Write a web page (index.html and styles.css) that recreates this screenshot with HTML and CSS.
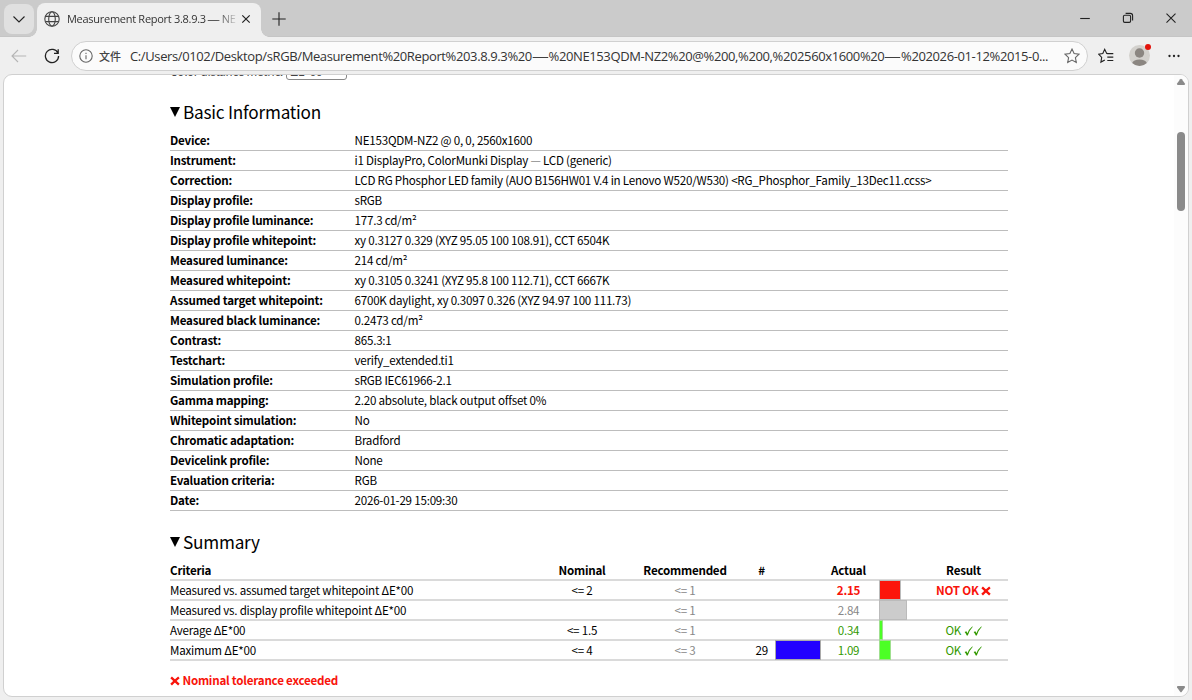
FILE: index.html
```html
<!DOCTYPE html>
<html lang="en">

<head>
  <meta charset="UTF-8">
  <meta name="viewport" content="width=device-width, initial-scale=1.0">
  <title>Measurement Report 3.8.9.3 — NE153QDM-NZ2</title>
  <link rel="stylesheet" href="styles.css">
</head>

<body>
  <div class="titlebar">
    <button class="tab-menu">
      <svg width="14" height="14" viewBox="0 0 14 14"><path d="M1.5 4.5L7 10l5.5-5.5"/></svg>
    </button>
    <div class="tab">
      <svg class="globe" width="16" height="16" viewBox="0 0 16 16">
        <circle cx="8" cy="8" r="7.2"/><ellipse cx="8" cy="8" rx="3.3" ry="7.2"/><path d="M1.4 5.4h13.2M1.4 10.6h13.2"/>
      </svg>
      <span class="tab-title">Measurement Report 3.8.9.3 <b class="long">—</b> NE</span>
      <svg class="tab-close" width="10" height="10" viewBox="0 0 10 10"><path d="M1.3 1.3l7.4 7.4M8.7 1.3L1.3 8.7"/></svg>
    </div>
    <svg class="new-tab" width="14" height="14" viewBox="0 0 14 14"><path d="M7 .3v13.4M.3 7h13.4"/></svg>
    <div class="window-buttons">
      <svg width="12" height="12" viewBox="0 0 12 12"><path d="M1.2 6.5h9.6"/></svg>
      <svg width="12" height="12" viewBox="0 0 12 12"><rect x="1.4" y="3.2" width="7.2" height="7.2" rx="1.3"/><path d="M3.6 1.4h4.7a2.3 2.3 0 0 1 2.3 2.3v4.7"/></svg>
      <svg width="12" height="12" viewBox="0 0 12 12"><path d="M1.5 1.7l9 9M10.5 1.7l-9 9"/></svg>
    </div>
  </div>

  <div class="toolbar">
    <svg class="back" width="16" height="16" viewBox="0 0 16 16"><path d="M15.2 8H1M7 2L1 8l6 6"/></svg>
    <svg class="reload" width="16" height="16" viewBox="0 0 16 16"><path d="M14 5.2A6.6 6.6 0 1 0 14.6 8M14.2 1.2v4.2H10"/></svg>
    <div class="address">
      <svg class="info" width="14" height="14" viewBox="0 0 14 14"><circle cx="7" cy="7" r="6.2"/><path d="M7 6.2v4M7 3.8v1.2"/></svg>
      <span class="scheme">文件</span>
      <span class="url">C:/Users/0102/Desktop/sRGB/Measurement%20Report%203.8.9.3%20<b class="long">—</b>%20NE153QDM-NZ2%20@%200,%200,%202560x1600%20<b class="long">—</b>%202026-01-12%2015-0...</span>
      <svg class="star" width="16" height="16" viewBox="0 0 16 16"><path d="M8 1.1l2.1 4.5 4.9.6-3.6 3.4.9 4.9L8 12.1l-4.3 2.4.9-4.9L1 6.2l4.9-.6z"/></svg>
    </div>
    <svg class="favorites" width="16" height="16" viewBox="0 0 16 16"><path d="M9.3 5.4H8.7L6.7 1.3 4.8 5.5l-4.2.7 3.1 3.2-.8 4.7 3.9-2.2M9.6 5.6h5.7M9.3 9.1h6M9.3 12.5h6M8.7 5.4l1 .2"/></svg>
    <div class="avatar">
      <svg width="21" height="21" viewBox="0 0 21 21"><circle cx="10.5" cy="10.5" r="10.5" fill="#d3d1cd"/><circle cx="10.5" cy="8" r="4.7" fill="#8b8681"/><path d="M3.2 18a7.5 4.6 0 0 1 14.6 0 10.5 10.5 0 0 1-14.6 0z" fill="#8b8681"/></svg>
      <i class="dot"></i>
    </div>
    <svg class="more" width="12" height="4" viewBox="0 0 12 4"><circle cx="1.5" cy="2" r="1.15"/><circle cx="6" cy="2" r="1.15"/><circle cx="10.5" cy="2" r="1.15"/></svg>
  </div>

  <div class="viewport">
    <div class="report">
      <div class="metric">Color distance metric: <span class="select">ΔE*00</span></div>

      <h2><span class="arrow"></span>Basic Information</h2>
      <table class="info-table">
        <tr><th>Device:</th><td>NE153QDM-NZ2 @ 0, 0, 2560x1600</td></tr>
        <tr><th>Instrument:</th><td>i1 DisplayPro, ColorMunki Display <span class="dash">—</span> LCD (generic)</td></tr>
        <tr><th>Correction:</th><td>LCD RG Phosphor LED family (AUO B156HW01 V.4 in Lenovo W520/W530) &lt;RG_Phosphor_Family_13Dec11.ccss&gt;</td></tr>
        <tr><th>Display profile:</th><td>sRGB</td></tr>
        <tr><th>Display profile luminance:</th><td>177.3 cd/m²</td></tr>
        <tr><th>Display profile whitepoint:</th><td>xy 0.3127 0.329 (XYZ 95.05 100 108.91), CCT 6504K</td></tr>
        <tr><th>Measured luminance:</th><td>214 cd/m²</td></tr>
        <tr><th>Measured whitepoint:</th><td>xy 0.3105 0.3241 (XYZ 95.8 100 112.71), CCT 6667K</td></tr>
        <tr><th>Assumed target whitepoint:</th><td>6700K daylight, xy 0.3097 0.326 (XYZ 94.97 100 111.73)</td></tr>
        <tr><th>Measured black luminance:</th><td>0.2473 cd/m²</td></tr>
        <tr><th>Contrast:</th><td>865.3:1</td></tr>
        <tr><th>Testchart:</th><td>verify_extended.ti1</td></tr>
        <tr><th>Simulation profile:</th><td>sRGB IEC61966-2.1</td></tr>
        <tr><th>Gamma mapping:</th><td>2.20 absolute, black output offset 0%</td></tr>
        <tr><th>Whitepoint simulation:</th><td>No</td></tr>
        <tr><th>Chromatic adaptation:</th><td>Bradford</td></tr>
        <tr><th>Devicelink profile:</th><td>None</td></tr>
        <tr><th>Evaluation criteria:</th><td>RGB</td></tr>
        <tr><th>Date:</th><td>2026-01-29 15:09:30</td></tr>
      </table>

      <h2 class="summary-title"><span class="arrow"></span>Summary</h2>
      <div class="summary">
        <div class="row head">
          <span class="left">Criteria</span><span>Nominal</span><span>Recommended</span><span>#</span><span></span><span>Actual</span><span></span><span>Result</span>
        </div>
        <div class="row">
          <span class="left">Measured vs. assumed target whitepoint ΔE*00</span><span>&lt;= 2</span><span class="gray">&lt;= 1</span><span></span><span></span><span class="bad">2.15</span><span class="bar"><i class="red" style="width: 22px"></i></span><span class="bad">NOT OK <svg class="cross" width="10" height="10" viewBox="0 0 9 9"><path d="M1 1.2Q4 4 8 7.8M8 1.2Q4.6 4 1 7.8"/></svg></span>
        </div>
        <div class="row">
          <span class="left">Measured vs. display profile whitepoint ΔE*00</span><span></span><span class="gray">&lt;= 1</span><span></span><span></span><span class="gray">2.84</span><span class="bar"><i class="silver" style="width: 28px"></i></span><span></span>
        </div>
        <div class="row">
          <span class="left">Average ΔE*00</span><span>&lt;= 1.5</span><span class="gray">&lt;= 1</span><span></span><span></span><span class="good">0.34</span><span class="bar"><i class="green" style="width: 4px"></i></span><span class="good">OK <svg class="check" width="18" height="10" viewBox="0 0 18 10"><path d="M.6 6.1L2.4 5.2 3.4 7.3Q5 3 8.2.4L8.8.8Q5.2 4.6 3.8 9.6H2.8Q1.8 7.4.6 6.1zM9.6 6.1l1.8-.9 1 2.1Q14 3 17.2.4l.6.4Q14.2 4.6 12.8 9.6h-1Q10.8 7.4 9.6 6.1z"/></svg></span>
        </div>
        <div class="row">
          <span class="left">Maximum ΔE*00</span><span>&lt;= 4</span><span class="gray">&lt;= 3</span><span class="num">29</span><span class="swatch"></span><span class="good">1.09</span><span class="bar"><i class="green" style="width: 12px"></i></span><span class="good">OK <svg class="check" width="18" height="10" viewBox="0 0 18 10"><path d="M.6 6.1L2.4 5.2 3.4 7.3Q5 3 8.2.4L8.8.8Q5.2 4.6 3.8 9.6H2.8Q1.8 7.4.6 6.1zM9.6 6.1l1.8-.9 1 2.1Q14 3 17.2.4l.6.4Q14.2 4.6 12.8 9.6h-1Q10.8 7.4 9.6 6.1z"/></svg></span>
        </div>
      </div>
      <p class="bad note"><svg class="cross" width="10" height="10" viewBox="0 0 9 9"><path d="M1 1.2Q4 4 8 7.8M8 1.2Q4.6 4 1 7.8"/></svg> Nominal tolerance exceeded</p>
    </div>

    <div class="scrollbar">
      <svg width="10" height="8" viewBox="0 0 10 8"><path d="M4.2 1.2q.8-1 1.6 0l3.1 4.4q.6 1.2-.7 1.3H1.8Q.5 6.8 1.1 5.6z"/></svg>
      <div class="thumb"></div>
      <svg class="down" width="10" height="8" viewBox="0 0 10 8"><path d="M4.2 6.8q.8 1 1.6 0l3.1-4.4q.6-1.2-.7-1.3H1.8Q.5 1.2 1.1 2.4z"/></svg>
    </div>
  </div>
</body>

</html>
```
FILE: styles.css
```css
* {
  margin: 0;
  padding: 0;
  box-sizing: border-box;
}

html,
body {
  height: 100%;
  overflow: hidden;
}

body {
  display: flex;
  flex-direction: column;
  background-color: #efefef;
  font-family: "Open Sans", "Noto Sans CJK SC", sans-serif;
}

svg {
  flex: none;
  fill: none;
  stroke: #222;
  stroke-width: 1.1;
}

/* tabs */
.titlebar {
  display: flex;
  height: 37px;
  padding-left: 4px;
  background-color: #cbcbcb;
  border-bottom: 1px solid #c5c5c5;
}

.tab-menu {
  display: flex;
  align-items: center;
  justify-content: center;
  width: 30px;
  height: 30px;
  margin-top: 4px;
  border: none;
  border-radius: 8px;
  background-color: #e0e0e0;
}

.tab {
  position: relative;
  display: flex;
  align-items: center;
  width: 224px;
  height: 34px;
  margin: 3px 0 0 3px;
  padding: 0 10px 3px 7px;
  border-radius: 8px 8px 0 0;
  background-color: #efefef;
}

/* curved feet of the active tab */
.tab::before,
.tab::after {
  content: "";
  position: absolute;
  bottom: 0;
  width: 8px;
  height: 8px;
}

.tab::before {
  left: -8px;
  background: radial-gradient(circle at 0 0, transparent 7.5px, #efefef 8px);
}

.tab::after {
  right: -8px;
  background: radial-gradient(circle at 100% 0, transparent 7.5px, #efefef 8px);
}

.globe {
  stroke: #444;
}

.tab-title {
  width: 170px;
  margin: 0 4px 0 7px;
  font-size: 11px;
  letter-spacing: -0.28px;
  line-height: 16px;
  color: #333;
  white-space: nowrap;
  -webkit-mask-image: linear-gradient(to right, #000 150px, transparent 173px);
}

.long {
  display: inline-block;
  font-weight: 400;
  transform: scaleX(1.15);
}

.tab-close {
  stroke-width: 1.2;
}

.new-tab {
  margin: 12px 0 0 11px;
}

.window-buttons {
  display: flex;
  gap: 31px;
  margin: 12px 15px 0 auto;
}

/* address row */
.toolbar {
  display: flex;
  align-items: center;
  flex: none;
  height: 37px;
  padding: 0 12px 0 11px;
}

.back {
  stroke: #b5b5b5;
}

.reload {
  margin: 0 11px 0 17px;
  stroke-width: 1.3;
}

.address {
  display: flex;
  align-items: center;
  width: 1017px;
  height: 30px;
  padding: 0 7px;
  border: 1px solid #d0d0d0;
  border-radius: 15px;
  background-color: #fbfbfb;
}

.info {
  stroke: #666;
}

.scheme {
  width: 31px;
  margin-left: 6px;
  font-size: 11px;
  font-weight: 500;
  color: #444;
}

.url {
  flex: 1;
  font-size: 13px;
  letter-spacing: -0.38px;
  color: #333;
  white-space: nowrap;
}

.url .long {
  margin: 0 2px;
  transform: scaleX(1.3);
}

.star {
  stroke: #666;
}

.favorites {
  margin-left: 10px;
}

.avatar {
  position: relative;
  width: 21px;
  height: 21px;
  margin-left: 15px;
}

.avatar svg {
  display: block;
  stroke: none;
}

.dot {
  position: absolute;
  top: -1px;
  right: -1px;
  width: 6px;
  height: 6px;
  border-radius: 50%;
  background-color: #e3130b;
}

.more {
  margin-left: auto;
  fill: #222;
  stroke: none;
}

/* page */
.viewport {
  position: relative;
  width: 1186px;
  height: 623px;
  margin-left: 3px;
  border: 1px solid #d0d0d0;
  border-radius: 9px;
  background-color: #fff;
  overflow: hidden;
}

.report {
  width: 838px;
  margin-left: 166px;
  font-family: "Noto Sans CJK SC", sans-serif;
  font-size: 11.6px;
  letter-spacing: -0.22px;
  color: #000;
}

.metric {
  height: 20px;
  margin-top: -14px;
  line-height: 21px;
  color: #444;
}

.select {
  display: inline-block;
  width: 61px;
  height: 19px;
  padding-left: 4px;
  border: 1px solid #888;
  border-radius: 3px;
  line-height: 19px;
  vertical-align: top;
}

h2 {
  display: flex;
  align-items: center;
  height: 26px;
  margin: 17px 0 7px;
  font-size: 17.2px;
  font-weight: 400;
}

.arrow {
  margin: 1px 3px 0 0;
  border: solid transparent;
  border-width: 10px 5.5px 0;
  border-top-color: #000;
}

.info-table {
  width: 838px;
  border-spacing: 0;
}

.info-table th,
.info-table td {
  height: 20px;
  border-bottom: 1px solid #bdbdbd;
  line-height: 19px;
  text-align: left;
  white-space: nowrap;
}

.info-table th {
  width: 184px;
}

.info-table td {
  padding-left: 0.5px;
}

.dash {
  color: #888;
}

.summary-title {
  margin: 17px 0 7px;
}

.row {
  display: grid;
  grid-template-columns: 363px 98px 108px 36px 46px 55px 43px 89px;
  height: 20px;
  border-bottom: 2px solid #dadada;
  line-height: 18px;
  text-align: center;
  white-space: nowrap;
}

.head {
  font-weight: 700;
}

.row .left {
  text-align: left;
}

.num {
  padding-right: 7px;
  text-align: right;
}

.head span:nth-child(4) {
  padding-left: 9px;
}

.gray {
  color: #888;
}

.good {
  color: #339900;
}

.bad {
  font-weight: 700;
  color: #f8140b;
}

/* colour cells run over the row border */
.swatch,
.bar {
  margin-top: -1px;
}

.swatch {
  height: 20px;
  border: 1px solid #aaa;
  background-color: #2200ff;
}

.bar {
  padding-left: 3px;
}

.bar i {
  display: block;
  height: 20px;
  border: 1px solid #bbb;
}

.red {
  background-color: #fc150b;
}

.silver {
  background-color: #ccc;
}

.green {
  background-color: #4cff26;
}

.bar .green {
  border-color: #9fe08f;
}

.cross {
  vertical-align: -1px;
  stroke: #f8140b;
  stroke-width: 2.1;
}

.check {
  vertical-align: -1px;
  fill: #339900;
  stroke: none;
}

.note {
  margin-top: 9px;
  line-height: 20px;
}

.scrollbar {
  position: absolute;
  top: 0;
  right: 0;
  display: flex;
  flex-direction: column;
  align-items: center;
  width: 14px;
  height: 100%;
  padding: 3px 0;
  background-color: #fcfcfc;
}

.scrollbar svg {
  fill: #8a8a8a;
  stroke: none;
}

.thumb {
  width: 8px;
  height: 79px;
  margin-top: 46px;
  border-radius: 4px;
  background-color: #8a8a8a;
}

.down {
  margin-top: auto;
}
```
